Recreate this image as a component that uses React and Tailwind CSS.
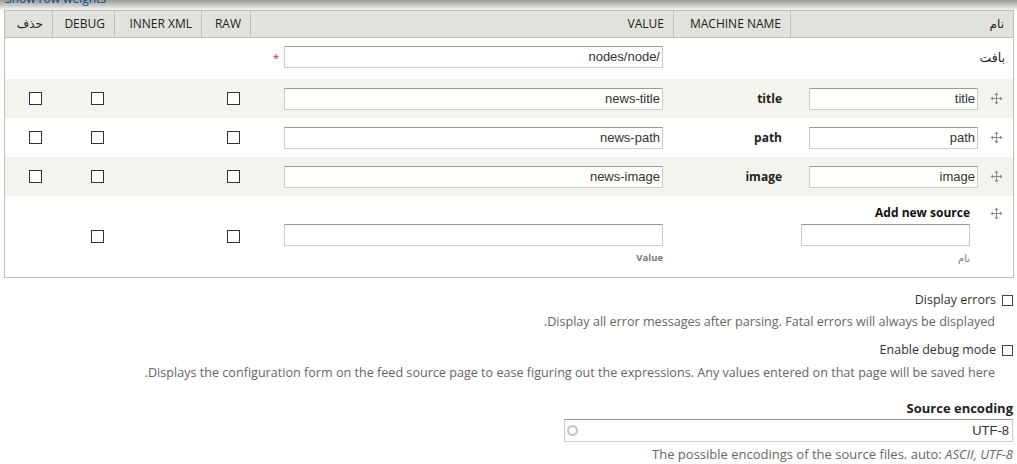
import React from "react";

const FONT = "font-['Open_Sans','DejaVu_Sans',sans-serif]";
const INPUT_FONT = "font-['Liberation_Sans',Arial,sans-serif]";

function Move() {
  return (
    <svg width="13" height="13" viewBox="0 0 13 13" className="shrink-0 block">
      <path d="M6.5 2.5v8M2.5 6.5h8" stroke="#8a8a8a" strokeWidth="1" />
      <path d="M6.5 0.5L4.5 3h4zM6.5 12.5l-2-2.5h4zM0.5 6.5L3 4.5v4zM12.5 6.5L10 4.5v4z" fill="#8a8a8a" />
    </svg>
  );
}

function Box({ small }) {
  return (
    <span
      className={
        small
          ? "block w-[11px] h-[11px] border border-[#444] bg-white shrink-0"
          : "block w-[13px] h-[13px] border border-[#333] bg-white shrink-0"
      }
    />
  );
}

function Field({ w, value, className = "" }) {
  return (
    <div
      className={`h-[22px] ${w} border border-[#ccc] border-t-[#999] bg-white pr-[2px] text-right text-[13px] leading-[20px] text-[#333] ${INPUT_FONT} ${className}`}
    >
      <span dir="ltr">{value}</span>
    </div>
  );
}

const cols = [
  "w-[223px]",
  "w-[117px]",
  "w-[423px]",
  "w-[49px]",
  "w-[87px]",
  "w-[62px]",
  "w-[47px]",
];

function Header() {
  const labels = ["نام", "MACHINE NAME", "VALUE", "RAW", "INNER XML", "DEBUG", "حذف"];
  return (
    <div className="flex h-[27px] bg-[#e1e2dc] border-b border-[#bebfb9]">
      {labels.map((l, i) => (
        <div
          key={i}
          className={`${cols[i]} shrink-0 flex items-center pr-[9px] text-[12px] text-[#222] ${
            i < 6 ? "border-l border-[#bebfb9]" : ""
          }`}
        >
          {l}
        </div>
      ))}
    </div>
  );
}

function SourceRow({ name, machine, value, even }) {
  return (
    <div className={`flex h-[39px] items-center ${even ? "bg-[#f3f4ee]" : "bg-white"}`}>
      <div className={`${cols[0]} shrink-0 flex items-center pr-[10px] gap-[12px]`}>
        <Move />
        <Field w="w-[169px]" value={name} />
      </div>
      <div className={`${cols[1]} shrink-0 pr-[8px] text-[12px] font-bold text-[#222]`}>{machine}</div>
      <div className={`${cols[2]} shrink-0 pr-[10px]`}>
        <Field w="w-[379px]" value={value} />
      </div>
      <div className={`${cols[3]} shrink-0 pr-[10px]`}>
        <Box />
      </div>
      <div className={`${cols[4]} shrink-0`} />
      <div className={`${cols[5]} shrink-0 pr-[10px]`}>
        <Box />
      </div>
      <div className={`${cols[6]} shrink-0 pr-[10px]`}>
        <Box />
      </div>
    </div>
  );
}

export default function App() {
  return (
    <div className={`relative w-[1017px] h-[464px] overflow-hidden bg-white ${FONT}`}>
      <div className="h-[10px] overflow-hidden pl-[5px]">
        <div className="mt-[-9px] text-[12px] leading-[16px] text-[#0074bd]">Show row weights</div>
      </div>
      <div className="absolute left-0 top-0 w-full h-[11px] bg-gradient-to-b from-black/40 to-transparent pointer-events-none" />

      <div dir="rtl" className="ml-[4px] w-[1010px] border border-[#bebfb9]">
        <Header />
        <div className="flex h-[41px] bg-white">
          <div className={`${cols[0]} shrink-0 pr-[8px] pt-[11px] text-[12.5px] text-[#222]`}>بافت</div>
          <div className={`${cols[1]} shrink-0`} />
          <div className={`${cols[2]} shrink-0 pr-[10px] pt-[8px] flex items-start gap-[5px]`}>
            <Field w="w-[379px]" value="nodes/node/" />
            <span className="text-[#e32700] text-[11px] leading-[22px] mt-[1px]">*</span>
          </div>
        </div>
        <SourceRow name="title" machine="title" value="news-title" even />
        <SourceRow name="path" machine="path" value="news-path" />
        <SourceRow name="image" machine="image" value="news-image" even />
        <div className="flex h-[81px] bg-white">
          <div className={`${cols[0]} shrink-0 flex items-start pr-[10px] pt-[11px] gap-[20px]`}>
            <Move />
            <div className="flex flex-col items-start -mt-[3px]">
              <div className="text-[12px] leading-[18px] font-bold text-[#111]">Add new source</div>
              <Field w="w-[169px]" value="" className="mt-[2px]" />
              <div className="mt-[4px] text-[10px] leading-[16px] text-[#777]">نام</div>
            </div>
          </div>
          <div className={`${cols[1]} shrink-0`} />
          <div className={`${cols[2]} shrink-0 pr-[10px] pt-[28px] flex flex-col items-start`}>
            <Field w="w-[379px]" value="" />
            <div className="mt-[4px] text-[9.5px] leading-[16px] font-bold text-[#777]">Value</div>
          </div>
          <div className={`${cols[3]} shrink-0 pr-[10px] flex items-center`}>
            <Box />
          </div>
          <div className={`${cols[4]} shrink-0`} />
          <div className={`${cols[5]} shrink-0 pr-[10px] flex items-center`}>
            <Box />
          </div>
          <div className={`${cols[6]} shrink-0`} />
        </div>
      </div>

      <div dir="rtl" className="pr-[4px]">
        <div className="mt-[13px] flex items-center gap-[6px] h-[18px] text-[12.5px] text-[#333]">
          <Box small />
          <span>Display errors</span>
        </div>
        <div className="mt-[5px] mr-[18px] h-[16px] text-[12.6px] leading-[16px] text-[#666]">
          Display all error messages after parsing. Fatal errors will always be displayed.
        </div>
        <div className="mt-[11px] flex items-center gap-[6px] h-[18px] text-[12.5px] text-[#333]">
          <Box small />
          <span>Enable debug mode</span>
        </div>
        <div className="mt-[6px] mr-[18px] h-[16px] text-[12.6px] leading-[16px] text-[#666]">
          Displays the configuration form on the feed source page to ease figuring out the expressions. Any values entered on that page will be saved here.
        </div>
        <div className="mt-[18px] h-[18px] text-[13px] leading-[18px] font-bold text-[#222]">Source encoding</div>
        <div
          className={`mt-[2px] w-[449px] h-[23px] border border-[#ccc] border-t-[#999] bg-white flex items-center justify-between pr-[3px] pl-[2px] text-[13px] text-[#333] ${INPUT_FONT}`}
        >
          <span>UTF-8</span>
          <span className="block w-[11px] h-[11px] rounded-full border-2 border-[#c4c4c4]" />
        </div>
        <div className="mt-[4px] h-[16px] text-[13px] leading-[16px] text-[#666]">
          <span dir="ltr">
            The possible encodings of the source files. auto: <em>ASCII, UTF-8</em>
          </span>
        </div>
      </div>
    </div>
  );
}
